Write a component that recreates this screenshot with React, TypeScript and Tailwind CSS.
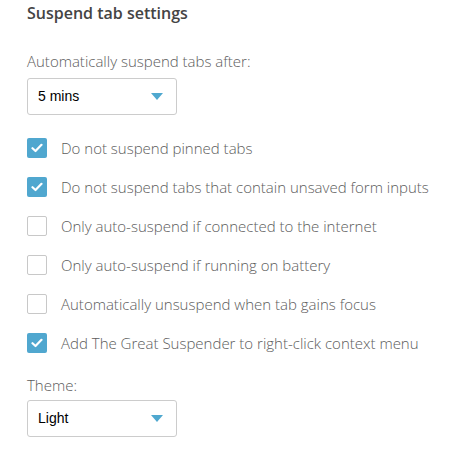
import React from "react";

const options = [
  { label: "Do not suspend pinned tabs", checked: true },
  { label: "Do not suspend tabs that contain unsaved form inputs", checked: true },
  { label: "Only auto-suspend if connected to the internet", checked: false },
  { label: "Only auto-suspend if running on battery", checked: false },
  { label: "Automatically unsuspend when tab gains focus", checked: false },
  { label: "Add The Great Suspender to right-click context menu", checked: true },
];

function Select({ value }: { value: string }) {
  return (
    <div className="flex items-center justify-between w-[150px] h-[37px] border border-[#ccc] rounded-[3px] pl-[10px] pr-[13px] bg-white">
      <span className="text-[14px] text-black font-['Liberation_Sans',Arial,sans-serif]">
        {value}
      </span>
      <svg width="12" height="7" viewBox="0 0 12 7">
        <path d="M0 0 L12 0 L6 7 Z" fill="#4fa8cf" />
      </svg>
    </div>
  );
}

function Checkbox({ checked }: { checked: boolean }) {
  if (checked) {
    return (
      <div className="w-[20px] h-[20px] rounded-[2px] bg-[#50a7cf] flex items-center justify-center shrink-0">
        <svg width="12" height="10" viewBox="0 0 12 10">
          <path
            d="M1.5 5.2 L4.5 8 L10.5 1.8"
            stroke="white"
            strokeWidth="2.2"
            fill="none"
            strokeLinecap="round"
            strokeLinejoin="round"
          />
        </svg>
      </div>
    );
  }
  return (
    <div className="w-[20px] h-[20px] rounded-[2px] border border-[#c8c8c8] bg-white shrink-0" />
  );
}

export default function App() {
  return (
    <div className="w-[450px] h-[468px] bg-white font-['Open_Sans',sans-serif] pl-[27px] pt-[2px]">
      <h2 className="text-[16px] font-semibold text-[#444] leading-[22px]">
        Suspend tab settings
      </h2>

      <p className="mt-[27px] text-[15px] font-light text-[#5c5c5c] leading-[20px]">
        Automatically suspend tabs after:
      </p>
      <div className="mt-[7px]">
        <Select value="5 mins" />
      </div>

      <div className="mt-[23px] flex flex-col gap-[19px]">
        {options.map((o) => (
          <div key={o.label} className="flex items-center gap-[14px] h-[20px]">
            <Checkbox checked={o.checked} />
            <span className="text-[15px] font-light text-[#5c5c5c] leading-[20px]">
              {o.label}
            </span>
          </div>
        ))}
      </div>

      <p className="mt-[22px] text-[15px] font-light text-[#5c5c5c] leading-[20px]">
        Theme:
      </p>
      <div className="mt-[5px]">
        <Select value="Light" />
      </div>
    </div>
  );
}
